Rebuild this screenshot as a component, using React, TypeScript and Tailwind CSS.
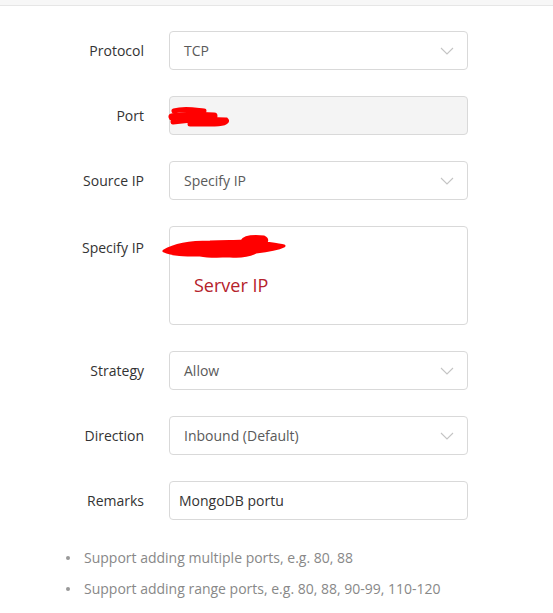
import React from "react";

const font = { fontFamily: '"Open Sans", "Noto Sans", Arial, sans-serif' };

function Chevron() {
  return (
    <svg width="14" height="8" viewBox="0 0 14 8" className="shrink-0">
      <path d="M1 1 L7 7 L13 1" fill="none" stroke="#c4c4c4" strokeWidth="1.1" />
    </svg>
  );
}

function Row({ label, children, top }: { label: string; children: React.ReactNode; top?: boolean }) {
  return (
    <div className={`flex ${top ? "items-start" : "items-center"}`}>
      <div className={`w-[144px] text-right text-[14px] text-[#333] ${top ? "pt-[11px]" : ""}`}>{label}</div>
      <div className="ml-[25px] w-[299px]">{children}</div>
    </div>
  );
}

function Select({ value }: { value: string }) {
  return (
    <div className="h-[39px] flex items-center justify-between pl-[14px] pr-[13px] border border-[#d9d9d9] rounded-[4px] bg-white text-[14px] text-[#5a5a5a]">
      <span>{value}</span>
      <Chevron />
    </div>
  );
}

export default function App() {
  return (
    <div className="w-[553px] h-[613px] bg-white overflow-hidden" style={font}>
      <div className="h-[6px] bg-[#f7f7f7] border-b border-[#e6e6e6]" />
      <div className="pt-[25px] flex flex-col gap-[26px]">
        <Row label="Protocol">
          <Select value="TCP" />
        </Row>

        <Row label="Port">
          <div className="relative h-[39px] border border-[#d9d9d9] rounded-[4px] bg-[#f4f4f4]">
            <svg className="absolute left-0 top-0 overflow-visible" width="70" height="39">
              <path d="M4 14 C14 11 24 13 34 14" stroke="#f00" strokeWidth="5" strokeLinecap="round" fill="none" />
              <path d="M2 20 C14 17 30 18 44 19" stroke="#f00" strokeWidth="7" strokeLinecap="round" fill="none" />
              <path d="M3 25 C18 23 38 22 56 23 C58 25 54 27 40 27 L20 27" stroke="#f00" strokeWidth="5" strokeLinecap="round" fill="none" />
            </svg>
          </div>
        </Row>

        <Row label="Source IP">
          <Select value="Specify IP" />
        </Row>

        <Row label="Specify IP" top>
          <div className="relative h-[99px] border border-[#d9d9d9] rounded-[4px] bg-white">
            <svg className="absolute left-0 top-0 overflow-visible" width="120" height="40">
              <path
                d="M-6 24 C4 18 20 15 40 15 C55 14 66 15 72 14 C74 10 84 9 94 10 C98 12 97 15 95 16 C102 17 110 18 114 19 C108 22 96 24 86 25 C80 28 70 30 60 29 C50 29 40 30 30 28 C15 28 2 28 -6 24 Z"
                fill="#f00"
                stroke="#f00"
                strokeWidth="3"
                strokeLinejoin="round"
              />
            </svg>
            <div className="absolute left-[24px] top-[45px] text-[18px] text-[#b5222b]">Server IP</div>
          </div>
        </Row>

        <Row label="Strategy">
          <Select value="Allow" />
        </Row>

        <Row label="Direction">
          <Select value="Inbound (Default)" />
        </Row>

        <Row label="Remarks">
          <div className="h-[39px] flex items-center pl-[9px] border border-[#d9d9d9] rounded-[4px] bg-white text-[14px] text-[#333]">
            MongoDB portu
          </div>
        </Row>
      </div>

      <ul className="mt-[27px] pl-[66px] text-[14px] text-[#888] flex flex-col gap-[10px]">
        <li className="flex items-center">
          <span className="w-[4px] h-[4px] rounded-full bg-[#999] mr-[14px]" />
          Support adding multiple ports, e.g. 80, 88
        </li>
        <li className="flex items-center">
          <span className="w-[4px] h-[4px] rounded-full bg-[#999] mr-[14px]" />
          Support adding range ports, e.g. 80, 88, 90-99, 110-120
        </li>
      </ul>
    </div>
  );
}
